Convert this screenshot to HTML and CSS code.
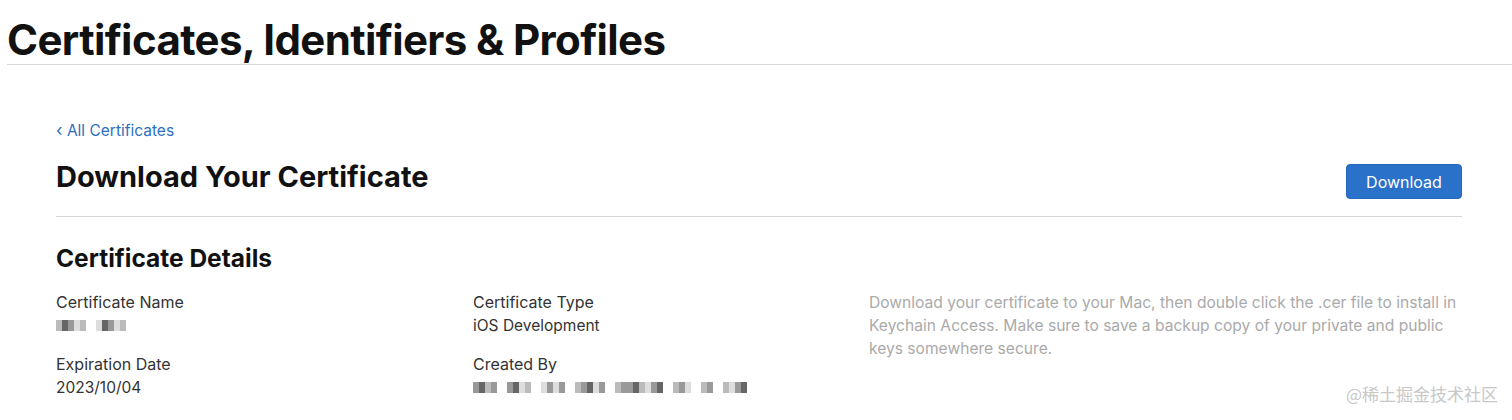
FILE: index.html
```html
<!DOCTYPE html>
<html lang="en">
<head>
<meta charset="utf-8">
<title>Certificates, Identifiers &amp; Profiles</title>
<link rel="stylesheet" href="styles.css">
</head>
<body>
<header class="top">
  <h1 class="top-title">Certificates, Identifiers &amp; Profiles</h1>
</header>
<main class="content">
  <a class="back" href="#"><span class="chev">‹</span> All Certificates</a>
  <div class="page-head">
    <h2 class="page-title">Download Your Certificate</h2>
    <button class="btn" type="button">Download</button>
  </div>
  <section class="details">
    <h3 class="details-title">Certificate Details</h3>
    <div class="grid">
      <div class="col">
        <div class="field">
          <div class="label">Certificate Name</div>
          <div class="value mosaic">
            <span class="px g3"></span><span class="px g1"></span><span class="px g2"></span><span class="px g4"></span><span class="px g3"></span><span class="sp"></span><span class="px g4"></span><span class="px g1"></span><span class="px g2"></span><span class="px g4"></span><span class="px g3"></span>
          </div>
        </div>
        <div class="field">
          <div class="label">Expiration Date</div>
          <div class="value">2023/10/04</div>
        </div>
      </div>
      <div class="col">
        <div class="field">
          <div class="label">Certificate Type</div>
          <div class="value">iOS Development</div>
        </div>
        <div class="field">
          <div class="label">Created By</div>
          <div class="value mosaic">
            <span class="px g2"></span><span class="px g1"></span><span class="px g3"></span><span class="px g2"></span><span class="sp"></span><span class="px g2"></span><span class="px g1"></span><span class="px g4"></span><span class="px g3"></span><span class="sp"></span><span class="px g4"></span><span class="px g2"></span><span class="px g4"></span><span class="px g2"></span><span class="sp"></span><span class="px g3"></span><span class="px g2"></span><span class="px g1"></span><span class="px g4"></span><span class="px g2"></span><span class="sp"></span><span class="px g3"></span><span class="px g2"></span><span class="px g2"></span><span class="px g1"></span><span class="px g3"></span><span class="px g4"></span><span class="px g2"></span><span class="px g1"></span><span class="sp"></span><span class="px g3"></span><span class="px g2"></span><span class="px g4"></span><span class="sp"></span><span class="px g3"></span><span class="px g2"></span><span class="sp"></span><span class="px g3"></span><span class="px g4"></span><span class="px g2"></span><span class="px g1"></span>
          </div>
        </div>
      </div>
      <p class="note">Download your certificate to your Mac, then double click the .cer file to install in Keychain Access. Make sure to save a backup copy of your private and public keys somewhere secure.</p>
    </div>
  </section>
</main>
<div class="watermark">@稀土掘金技术社区</div>
</body>
</html>
```

FILE: styles.css
```css
* { box-sizing: border-box; }
html, body { margin: 0; padding: 0; background: #fff; }
body {
  font-family: Inter, "Noto Sans", "Liberation Sans", sans-serif;
  color: #1d1d1f;
  position: relative;
  height: 420px;
  overflow: hidden;
}
.top {
  margin-left: 7px;
  border-bottom: 1px solid #d8d8d8;
  padding-top: 18px;
  height: 65px;
}
.top-title {
  margin: 0;
  font-size: 42px;
  line-height: 44px;
  font-weight: 700;
  letter-spacing: -0.62px;
  color: #111;
}
.content {
  padding: 0 50px 0 56px;
}
.back {
  display: inline-block;
  margin-top: 55px;
  font-size: 15.5px;
  line-height: 20px;
  color: #2d6fc0;
  text-decoration: none;
}
.chev { font-size: 17px; }
.page-head {
  display: flex;
  justify-content: space-between;
  align-items: flex-start;
  border-bottom: 1px solid #d6d6d6;
  padding: 23px 0 17px;
}
.page-title {
  margin: -5px 0 0;
  font-size: 29px;
  line-height: 36px;
  font-weight: 700;
  color: #111;
}
.btn {
  font-family: inherit;
  font-size: 16px;
  color: #fff;
  background: #2a71c9;
  border: 1px solid #2466b8;
  border-radius: 4px;
  width: 116px;
  height: 35px;
  padding: 0;
}
.details-title {
  margin: 26px 0 18px;
  font-size: 24.5px;
  line-height: 30px;
  font-weight: 700;
  color: #111;
}
.grid {
  display: grid;
  grid-template-columns: 417px 396px 1fr;
}
.field { margin-bottom: 16px; }
.label {
  font-size: 16px;
  line-height: 23px;
  color: #333;
}
.value {
  font-size: 15.5px;
  line-height: 23px;
  color: #333;
}
.mosaic {
  display: flex;
  align-items: center;
  height: 23px;
}
.px {
  display: inline-block;
  width: 6px;
  height: 11px;
}
.sp { display: inline-block; width: 10px; }
.g1 { background: #666; }
.g2 { background: #999; }
.g3 { background: #bbb; }
.g4 { background: #ddd; }
.note {
  margin: 0;
  font-size: 15.6px;
  line-height: 23px;
  color: #aaa;
  max-width: 600px;
}
.watermark {
  position: absolute;
  right: 14px;
  bottom: 14px;
  font-family: "Noto Sans CJK SC", sans-serif;
  font-size: 17px;
  color: #c8c8c8;
}
```
